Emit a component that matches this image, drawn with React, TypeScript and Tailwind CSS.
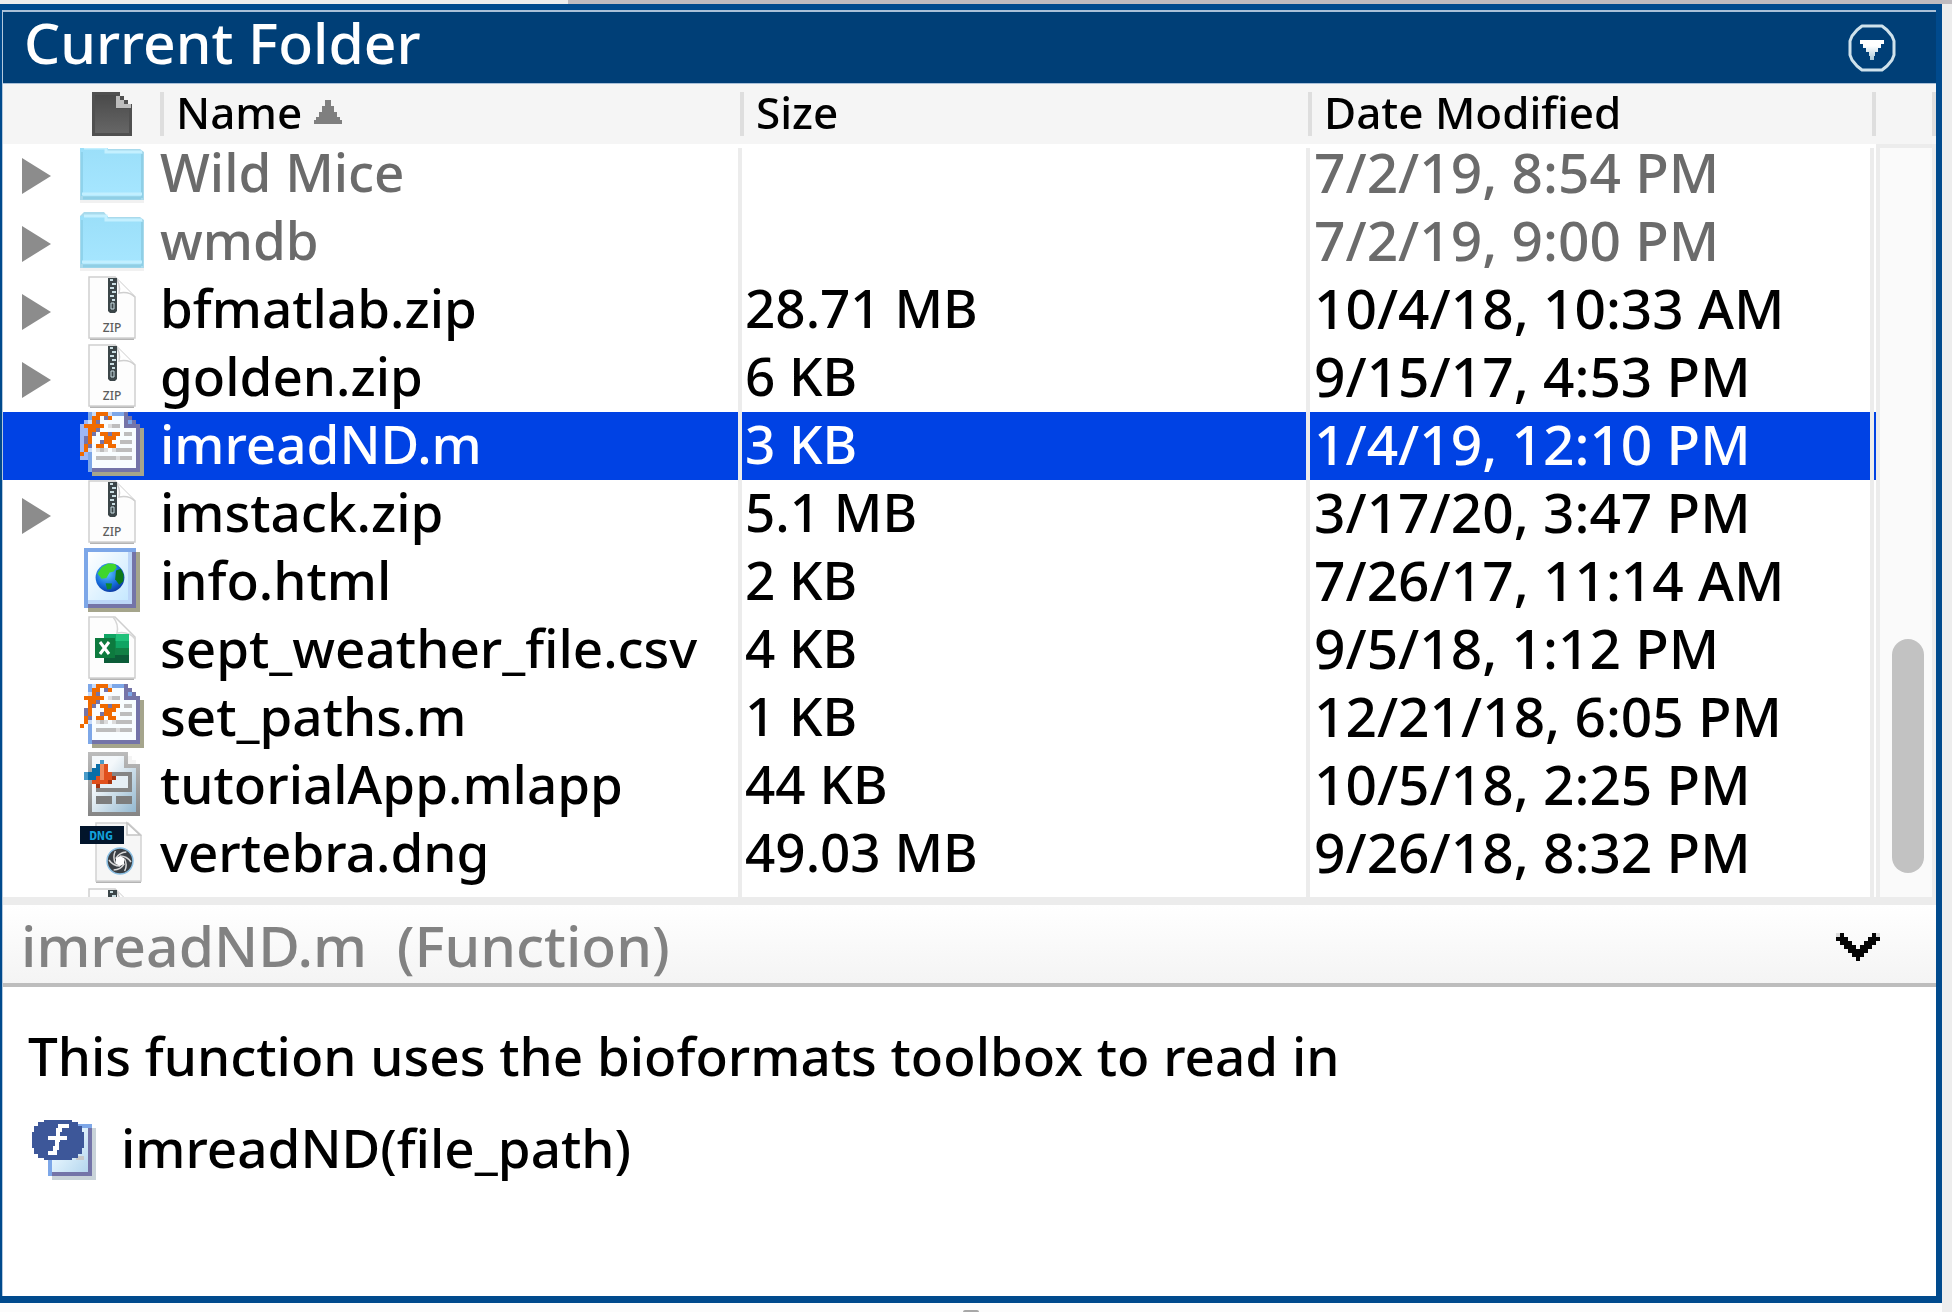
import { useLayoutEffect, useRef, type ReactNode } from "react";

const PALETTE: Record<string, string> = {
  B: "#7da7e8",
  L: "#c8dcfa",
  O: "#f06a00",
  P: "#7474a8",
  W: "#f8fdff",
  G: "#bdbdbd",
  g: "#dcdcdc",
  T: "#a5a58c",
  h: "rgba(255,255,255,0.62)",
  a: "#0a6ea8",
  b: "#4a9bc8",
  r: "#e0501c",
  s: "#f08a5c",
  d: "#a83410",
  K: "#050505",
};

function Pixels({ rows }: { rows: string[] }) {
  return (
    <g shapeRendering="crispEdges">
      {rows.flatMap((row, y) =>
        [...row].map((c, x) =>
          PALETTE[c] ? <rect key={`${x}-${y}`} x={x} y={y} width="1" height="1" fill={PALETTE[c]} /> : null,
        ),
      )}
    </g>
  );
}

const FX_ROWS = [
  "..BLOOOLBBBP....",
  "..BOOWPOWWWPP...",
  ".hLOPWWWWWWPBP..",
  "hOOOOOWgGGWPPPP.",
  "hhOOPWWWWWWWWWPT",
  "hhOPWOOPOOWGGWPT",
  "hPOWWWOOOWWWWWPT",
  "hPOWWPOOWWGGGWPT",
  "hOPWOOWOOWWWWWPT",
  "hOLWgGgWgGGGGWPT",
  "OhBWWWWWWWWWWWPT",
  "hhBWGGGGGgGGGWPT",
  "..BWWWWWWWWWWWPT",
  "..BWWWWWWWWWWWPT",
  "..BPPPPPPPPPPPPT",
  "...TTTTTTTTTTTTT",
];

function FunctionFileIcon() {
  return (
    <svg viewBox="0 0 16 16" className="size-16" aria-hidden="true">
      <Pixels rows={FX_ROWS} />
    </svg>
  );
}

function FolderIcon() {
  return (
    <svg viewBox="0 0 64 64" className="size-16" aria-hidden="true">
      <defs>
        <linearGradient id="folder" x1="0" y1="0" x2="0" y2="1">
          <stop offset="0" stopColor="#9bdff9" />
          <stop offset="1" stopColor="#a6e6ff" />
        </linearGradient>
      </defs>
      <path d="M0 58h64v5H0z" fill="#f1f1f1" />
      <path d="M0 8l4-4h20l4 5h32l4 3v48H0z" fill="#a9daec" />
      <path d="M0 8h28v4h34v44H3z" fill="url(#folder)" />
      <path d="M4 8h22v4h36" fill="none" stroke="#c4f0ff" strokeWidth="3" />
      <path d="M2 12v44" stroke="#8fd3ec" strokeWidth="2" />
      <path d="M62 14v44" stroke="#8fcfe6" strokeWidth="2" />
      <path d="M2 54h60" stroke="#c2efff" strokeWidth="3" />
      <path d="M3 58h58" stroke="#8fcfe6" strokeWidth="3" />
    </svg>
  );
}

function Sheet({ children }: { children?: ReactNode }) {
  return (
    <svg viewBox="0 0 64 64" className="size-16" aria-hidden="true">
      <path d="M10 63h44" stroke="#b4b4b4" strokeWidth="2" />
      <path d="M9 1h26l20 20v41H9z" fill="#fdfdfd" stroke="#cfcfcf" strokeWidth="1.5" />
      {children}
    </svg>
  );
}

function ZipIcon({ labelled = true }: { labelled?: boolean }) {
  return (
    <Sheet>
      <path d="M35 1q6 7 4 16q10-2 16 4" fill="#fff" stroke="#cfcfcf" strokeWidth="1.5" />
      <path d="M28 2h9v33l-2 2h-5l-2-2z" fill="#3b4548" />
      <path d="M30 4h3M32 8h4M30 12h4M32 16h4M30 20h4M32 24h3" stroke="#c9dde2" strokeWidth="2" />
      <path d="M31 27h3v6h-3z" fill="none" stroke="#c9dde2" strokeWidth="1" />
      {labelled && (
        <text x="32" y="56" textAnchor="middle" fontSize="12" fontFamily="Noto Sans" fontWeight="500" fill="#5c5c5c">
          ZIP
        </text>
      )}
    </Sheet>
  );
}

function ExcelIcon() {
  return (
    <Sheet>
      <path d="M33 1q6 7 4 16q12-2 18 6" fill="#fff" stroke="#d6d6d6" strokeWidth="1.5" />
      <path d="M24 18h12v14H24z" fill="#10a463" />
      <path d="M36 18h13v7H36z" fill="#21c17a" />
      <path d="M24 25h12v7H24z" fill="#0b8a4a" />
      <path d="M36 25h13v7H36z" fill="#10a463" />
      <path d="M24 32h25v7H24z" fill="#128045" />
      <path d="M24 39h25v8H24z" fill="#0b5c38" />
      <path d="M15 22h20v20H15z" fill="#0d7a3e" />
      <path d="M20 26l9 12M29 26l-9 12" stroke="#fff" strokeWidth="3" />
    </Sheet>
  );
}

function HtmlIcon() {
  return (
    <svg viewBox="0 0 16 16" className="size-16" aria-hidden="true">
      <defs>
        <linearGradient id="page" x1="0" y1="0" x2="1" y2="1">
          <stop offset="0" stopColor="#ffffff" />
          <stop offset="1" stopColor="#c6e8ff" />
        </linearGradient>
        <radialGradient id="sea" cx="0.4" cy="0.35" r="0.75">
          <stop offset="0" stopColor="#5cc8ff" />
          <stop offset="0.6" stopColor="#1468d8" />
          <stop offset="1" stopColor="#0a2c90" />
        </radialGradient>
      </defs>
      <path d="M2 1h13v15H2z" fill="#a5a58c" />
      <path d="M1 0h13v15H1z" fill="#7474a8" />
      <path d="M1 0h13v1h-1v13H2v1H1z" fill="#7da7e8" />
      <path d="M2 1h11v13H2z" fill="#bcd6f8" />
      <path d="M2 1h10v12H2z" fill="url(#page)" />
      <circle cx="7.5" cy="7.4" r="3.6" fill="url(#sea)" />
      <path d="M4.4 6.4l1-1.6 1.6-.9 1.8.1.4.9-.8 1-1 .2-.8 1.4-1.2.2z" fill="#3fd62c" />
      <path d="M9 5.6l1.2-.4.7 1.4-.1 1.8-1 .8-1-1.4z" fill="#0c7a18" />
      <path d="M6.4 8.8l1.6.1-.2 1.3-1 .2z" fill="#0e8a30" />
    </svg>
  );
}

function AppFileIcon() {
  return (
    <svg viewBox="0 0 16 16" className="size-16" aria-hidden="true">
      <defs>
        <linearGradient id="app" x1="0" y1="0" x2="1" y2="1">
          <stop offset="0.3" stopColor="#f4f8fb" />
          <stop offset="1" stopColor="#93b8d0" />
        </linearGradient>
        <linearGradient id="edge" x1="0" y1="0" x2="0" y2="1">
          <stop offset="0" stopColor="#bcbcbc" />
          <stop offset="1" stopColor="#858585" />
        </linearGradient>
      </defs>
      <g shapeRendering="crispEdges">
        <path d="M2 0h10v1h1v1h1v1h1v13H2z" fill="url(#edge)" />
        <path d="M3 1h8v3h3v11H3z" fill="url(#app)" />
        <path d="M12 1h1v1h1v1h-2z" fill="#f4f4f4" />
        <path d="M4 5h9v5H4z" fill="#858585" />
        <path d="M5 6h7v3H5z" fill="#e6eff5" />
        <path d="M4 11h4v2H4zM9 11h4v2H9z" fill="#7d7d7d" />
      </g>
      <Pixels
        rows={[
          "................",
          "................",
          ".....b..........",
          "....asr.........",
          "...aasr.........",
          ".baaasrr........",
          ".baarsrrd.......",
          "...rrrrd........",
          "....d...........",
        ]}
      />
    </svg>
  );
}

function DngIcon() {
  return (
    <svg viewBox="0 0 64 64" className="size-16" aria-hidden="true">
      <path d="M16 62h45" stroke="#b4b4b4" strokeWidth="2" />
      <path d="M16 3h32l13 12v46H16z" fill="#f6f6f6" stroke="#d2d2d2" strokeWidth="1.5" />
      <path d="M47 3l13 12H47z" fill="#fff" stroke="#c4c4c4" strokeWidth="1.5" />
      <path d="M0 6h44v18H0z" fill="#02152b" />
      <text x="21" y="20" textAnchor="middle" fontSize="13" fontFamily="DejaVu Sans Mono" fontWeight="700" fill="#12a2dc">
        DNG
      </text>
      <circle cx="40" cy="41" r="13" fill="#3a3f44" stroke="#8cc0e4" strokeWidth="1.5" />
      <g stroke="#d8d8d8" strokeWidth="1.5" fill="none">
        {[0, 60, 120, 180, 240, 300].map((a) => (
          <path key={a} d="M40 36q7 0 11 6" transform={`rotate(${a} 40 41)`} />
        ))}
      </g>
      <path d="M40 36l4 2v6l-4 2-4-2v-6z" fill="#fff" />
    </svg>
  );
}

function Disclosure() {
  return (
    <svg viewBox="0 0 29 36" className="h-9 w-[29px]" aria-hidden="true">
      <path d="M0 0l29 18L0 36z" fill="#8c8c8c" />
    </svg>
  );
}

function FileTypeIcon() {
  return (
    <svg viewBox="0 0 40 44" className="h-11 w-10" aria-hidden="true">
      <defs>
        <linearGradient id="filetype" x1="0" y1="0" x2="0" y2="1">
          <stop offset="0" stopColor="#4a4a4a" />
          <stop offset="1" stopColor="#666666" />
        </linearGradient>
      </defs>
      <path d="M0 0h28v4h4v4h4v4h4v32H0z" fill="#505050" />
      <path d="M3 3h21v14h13v24H3z" fill="url(#filetype)" />
      <path d="M24 4h4v4h4v4h7v4H24z" fill="#bdbdbd" />
    </svg>
  );
}

function SortIcon() {
  return (
    <svg viewBox="0 0 28 24" className="h-6 w-7" aria-hidden="true">
      <path d="M11 0h6v6h3v6h3v5h3v3h2v4H0v-4h2v-3h3v-5h3V6h3z" fill="#7f7f7f" />
    </svg>
  );
}

function MenuIcon() {
  return (
    <svg viewBox="0 0 48 48" className="size-12" aria-hidden="true">
      <defs>
        <linearGradient id="menu" x1="0" y1="0" x2="0" y2="1">
          <stop offset="0.3" stopColor="#ffffff" />
          <stop offset="1" stopColor="#a9c8d8" />
        </linearGradient>
      </defs>
      <path
        d="M14 2h20l5 4 5 6 2 5v14l-2 5-5 6-5 4H14l-5-4-5-6-2-5V17l2-5 5-6z"
        fill="none"
        stroke="#cfe2ec"
        strokeWidth="3"
        strokeLinejoin="round"
      />
      <path d="M12 16h24v4h-3v4h-3v4h-3v4h-1v4h-4v-4h-1v-4h-3v-4h-3v-4h-3z" fill="url(#menu)" />
    </svg>
  );
}

function ChevronIcon() {
  return (
    <svg viewBox="0 0 11 7" className="h-7 w-11" shapeRendering="crispEdges" aria-hidden="true">
      <Pixels
        rows={["gK.......Kg", "KKK.....KKK", ".KKK...KKK.", "..KKK.KKK..", "...KKKKK...", "....KKK....", ".....K....."]}
      />
    </svg>
  );
}

function MethodIcon() {
  return (
    <svg viewBox="0 0 64 60" className="h-[60px] w-16" aria-hidden="true">
      <defs>
        <linearGradient id="method" x1="0" y1="0" x2="1" y2="1">
          <stop offset="0.3" stopColor="#eaf8ff" />
          <stop offset="1" stopColor="#b4d6ee" />
        </linearGradient>
      </defs>
      <path d="M20 8h44v52H20z" fill="#c9d3d9" />
      <path d="M16 4h44v52H16z" fill="#7474a8" />
      <path d="M16 4h44v4h-4v44H20v4h-4z" fill="#7da7e8" />
      <path d="M20 8h36v44H20z" fill="url(#method)" />
      <path d="M44 36h8v4h-8z" fill="#c8c8c8" />
      <path
        d="M12 0h28v2h6v4h4v6h2v16h-2v6h-4v4h-6v2H12v-2H6v-4H2v-6H0V12h2V6h4V2h6z"
        fill="#3d5799"
      />
      <path d="M37 6h-9v4h-2v10h-1v8h-2v5h-7" fill="none" stroke="#fff" strokeWidth="4" />
      <path d="M16 18h19" stroke="#fff" strokeWidth="4" />
    </svg>
  );
}

type Entry = {
  name: string;
  size: string;
  date: string;
  icon: ReactNode;
  expandable?: boolean;
  dimmed?: boolean;
  selected?: boolean;
};

const ENTRIES: Entry[] = [
  { name: "Wild Mice", size: "", date: "7/2/19, 8:54 PM", icon: <FolderIcon />, expandable: true, dimmed: true },
  { name: "wmdb", size: "", date: "7/2/19, 9:00 PM", icon: <FolderIcon />, expandable: true, dimmed: true },
  { name: "bfmatlab.zip", size: "28.71 MB", date: "10/4/18, 10:33 AM", icon: <ZipIcon />, expandable: true },
  { name: "golden.zip", size: "6 KB", date: "9/15/17, 4:53 PM", icon: <ZipIcon />, expandable: true },
  { name: "imreadND.m", size: "3 KB", date: "1/4/19, 12:10 PM", icon: <FunctionFileIcon />, selected: true },
  { name: "imstack.zip", size: "5.1 MB", date: "3/17/20, 3:47 PM", icon: <ZipIcon />, expandable: true },
  { name: "info.html", size: "2 KB", date: "7/26/17, 11:14 AM", icon: <HtmlIcon /> },
  { name: "sept_weather_file.csv", size: "4 KB", date: "9/5/18, 1:12 PM", icon: <ExcelIcon /> },
  { name: "set_paths.m", size: "1 KB", date: "12/21/18, 6:05 PM", icon: <FunctionFileIcon /> },
  { name: "tutorialApp.mlapp", size: "44 KB", date: "10/5/18, 2:25 PM", icon: <AppFileIcon /> },
  { name: "vertebra.dng", size: "49.03 MB", date: "9/26/18, 8:32 PM", icon: <DngIcon /> },
  { name: "", size: "", date: "", icon: <ZipIcon labelled={false} /> },
];

function HeaderCell({ children }: { children?: ReactNode }) {
  return (
    <th scope="col" className="p-0 text-left font-medium">
      <div className="flex h-[60px] items-start bg-[#f5f5f5] pl-0.5">
        <span className="mt-2 h-11 w-1 shrink-0 bg-[#dedede]" />
        {children}
      </div>
      <div className="h-1 bg-white" />
    </th>
  );
}

function Row({ entry }: { entry: Entry }) {
  const tone = entry.selected ? "bg-[#0042e4] text-white" : entry.dimmed ? "text-[#6b6b6b]" : "text-black";
  return (
    <tr className={`h-[68px] align-top ${tone}`} aria-selected={entry.selected ? true : undefined}>
      <td className="p-0">
        <div className="flex h-16 items-start">
          <div className="flex h-full w-[77px] shrink-0 items-start pt-[18px] pl-[19px]">
            {entry.expandable && (
              <button type="button" aria-label={`Expand ${entry.name}`}>
                <Disclosure />
              </button>
            )}
          </div>
          {entry.icon}
          <span className="ml-4 whitespace-nowrap">{entry.name}</span>
        </div>
      </td>
      <td className="border-l-4 border-[#ececec] p-0 pl-[3px] whitespace-nowrap">{entry.size}</td>
      <td className="border-l-4 border-[#ececec] p-0 pl-1 text-[55px] whitespace-nowrap">{entry.date}</td>
      <td className="border-l-4 border-[#ececec] p-0" />
    </tr>
  );
}

function FileTable() {
  const view = useRef<HTMLDivElement>(null);
  useLayoutEffect(() => {
    if (view.current) view.current.scrollTop = 8;
  }, []);
  return (
    <div ref={view} className="min-w-0 flex-1 overflow-hidden">
      <table className="w-full table-fixed border-separate border-spacing-0 text-[53px] leading-[64px]">
        <colgroup>
          <col />
          <col className="w-[568px]" />
          <col className="w-[564px]" />
          <col className="w-1.5" />
        </colgroup>
        <thead className="sticky top-0 z-10 text-[44px] leading-[56px]">
          <tr>
            <th scope="col" aria-sort="ascending" className="p-0 text-left font-medium">
              <div className="flex h-[60px] items-start bg-[#f5f5f5] pl-[89px]">
                <span className="mt-2">
                  <FileTypeIcon />
                </span>
                <span className="mt-2 ml-7 h-11 w-1 bg-[#dedede]" />
                <button type="button" className="ml-3 flex items-start gap-3 font-medium">
                  Name
                  <span className="mt-4">
                    <SortIcon />
                  </span>
                </button>
              </div>
              <div className="h-1 bg-white" />
            </th>
            <HeaderCell>
              <button type="button" className="ml-3 font-medium">
                Size
              </button>
            </HeaderCell>
            <HeaderCell>
              <button type="button" className="ml-3 font-medium whitespace-nowrap">
                Date Modified
              </button>
            </HeaderCell>
            <HeaderCell />
          </tr>
        </thead>
        <tbody>
          {ENTRIES.map((entry, i) => (
            <Row key={i} entry={entry} />
          ))}
        </tbody>
      </table>
    </div>
  );
}

function ScrollColumn() {
  return (
    <div className="flex w-[60px] shrink-0 flex-col">
      <div className="flex h-[60px] justify-end bg-[#f5f5f5] pt-2">
        <span className="h-11 w-1 bg-[#dedede]" />
      </div>
      <div className="flex flex-1 flex-col justify-end border-4 border-b-0 border-[#ececec] bg-[#fafafa] pb-6 pl-3">
        <div className="h-[234px] w-8 rounded-full bg-[#c2c2c2]" />
      </div>
    </div>
  );
}

export default function App() {
  return (
    <div className="flex h-screen flex-col overflow-hidden bg-[#ededed] font-['Noto_Sans',sans-serif] font-medium text-black">
      <div className="flex h-1 shrink-0">
        <div className="w-[568px]" />
        <div className="flex-1 bg-[#bfbbbf]" />
      </div>
      <main className="mr-2.5 flex min-h-0 flex-1 flex-col border-t-[6px] border-r-[6px] border-b-[7px] border-l-2 border-[#004a8d] bg-white">
        <div className="flex min-h-0 flex-1 flex-col border-l border-[#b4c8dc]">
          <header className="flex h-[74px] shrink-0 items-start justify-between border-t-2 border-b border-[#a9c0d8] bg-[#003f77] pr-10 pl-[21px]">
            <h1 className="text-[57px] leading-[60px] font-medium text-white">Current Folder</h1>
            <button type="button" aria-label="Current Folder actions" className="mt-3">
              <MenuIcon />
            </button>
          </header>
          <section className="flex min-h-0 flex-1">
            <FileTable />
            <ScrollColumn />
          </section>
          <section className="shrink-0">
            <div className="h-2 bg-[#ececec]" />
            <div className="flex h-[82px] items-start justify-between border-b-4 border-[#bdbdbd] bg-linear-to-b from-white to-[#f4f4f4] pr-14 pl-[18px]">
              <h2 className="pt-0.5 text-[57px] leading-[76px] font-medium whitespace-pre text-[#828282]">
                {"imreadND.m  (Function)"}
              </h2>
              <button type="button" aria-label="Collapse details" className="mt-7">
                <ChevronIcon />
              </button>
            </div>
            <div className="flex h-[309px] flex-col gap-7 pt-[37px] text-[53px] leading-[64px]">
              <p className="pl-[25px]">This function uses the bioformats toolbox to read in</p>
              <div className="flex items-start gap-[25px] pl-[29px]">
                <span className="mt-1">
                  <MethodIcon />
                </span>
                <span>imreadND(file_path)</span>
              </div>
            </div>
          </section>
        </div>
      </main>
      <div className="mr-2.5 flex h-[9px] shrink-0 items-end justify-center overflow-hidden bg-[#fcfcfc]">
        <div className="h-0.5 w-4 rounded-t-full bg-[#a8a8a8]" />
      </div>
    </div>
  );
}
